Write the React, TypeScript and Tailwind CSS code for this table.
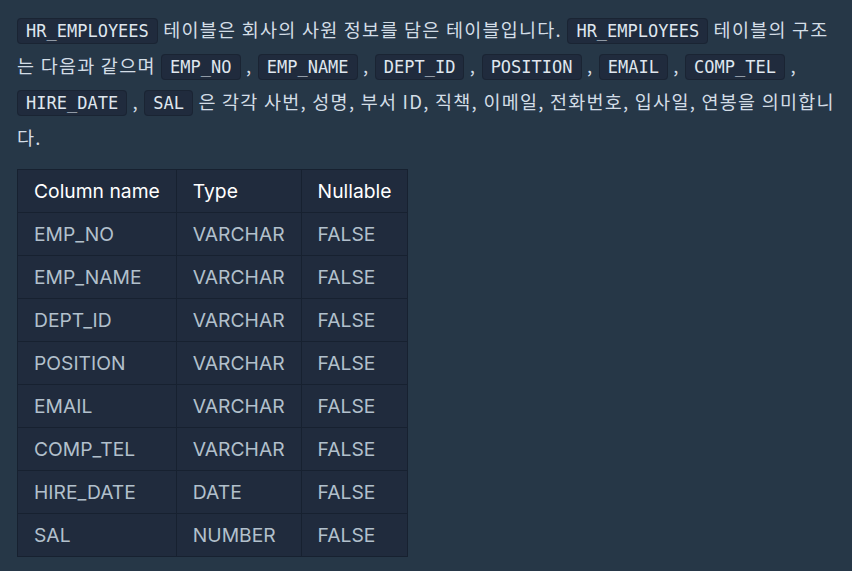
import React from 'react';

const rows: [string, string, string][] = [
  ['EMP_NO', 'VARCHAR', 'FALSE'],
  ['EMP_NAME', 'VARCHAR', 'FALSE'],
  ['DEPT_ID', 'VARCHAR', 'FALSE'],
  ['POSITION', 'VARCHAR', 'FALSE'],
  ['EMAIL', 'VARCHAR', 'FALSE'],
  ['COMP_TEL', 'VARCHAR', 'FALSE'],
  ['HIRE_DATE', 'DATE', 'FALSE'],
  ['SAL', 'NUMBER', 'FALSE'],
];

const Code: React.FC<{ children: React.ReactNode }> = ({ children }) => (
  <code className="rounded bg-[#202b3d] border border-[#1a2433] px-2 py-[2px] font-['DejaVu_Sans_Mono',monospace] text-[17px] leading-[20px] tracking-normal text-[#dfe6ee]">
    {children}
  </code>
);

const App: React.FC = () => {
  return (
    <div className="min-h-[571px] w-full bg-[#263747] px-[17px] pt-[11px] pb-6 font-['Noto_Sans_CJK_KR',sans-serif] text-[#d3dde6]">
      <p className="text-[18.5px] leading-[36px] tracking-[1.25px]">
        <Code>HR_EMPLOYEES</Code> 테이블은 회사의 사원 정보를 담은 테이블입니다. <Code>HR_EMPLOYEES</Code> 테이블의 구조는 다음과 같으며{' '}
        <Code>EMP_NO</Code> , <Code>EMP_NAME</Code> , <Code>DEPT_ID</Code> , <Code>POSITION</Code> , <Code>EMAIL</Code> ,{' '}
        <Code>COMP_TEL</Code> , <Code>HIRE_DATE</Code> , <Code>SAL</Code> 은 각각 사번, 성명, 부서 ID, 직책, 이메일, 전화번호, 입사일, 연봉을 의미합니다.
      </p>
      <table className="mt-[14px] border-collapse bg-[#202b3d] font-['Inter',sans-serif] text-[19.3px]">
        <thead>
          <tr className="h-[43px]">
            <th className="border border-[#172130] px-4 text-left font-normal text-white">Column name</th>
            <th className="border border-[#172130] px-4 text-left font-normal text-white">Type</th>
            <th className="border border-[#172130] px-4 text-left font-normal text-white">Nullable</th>
          </tr>
        </thead>
        <tbody>
          {rows.map(([name, type, nullable]) => (
            <tr key={name} className="h-[43px] text-[#b2c0cc]">
              <td className="border border-[#172130] px-4">{name}</td>
              <td className="border border-[#172130] px-4">{type}</td>
              <td className="border border-[#172130] px-4">{nullable}</td>
            </tr>
          ))}
        </tbody>
      </table>
    </div>
  );
};

export default App;
